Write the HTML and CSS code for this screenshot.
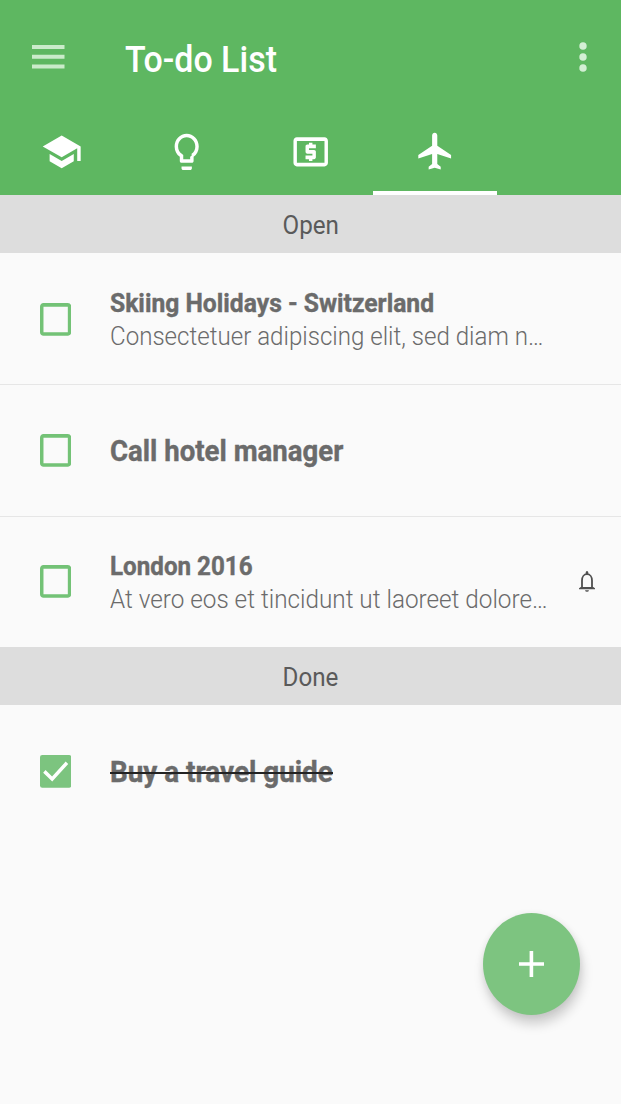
FILE: index.html
```
<!DOCTYPE html>
<html lang="en">
<head>
<meta charset="utf-8">
<title>To-do List</title>
<link rel="stylesheet" href="styles.css">
</head>
<body>
<div class="app">
  <header class="appbar">
    <div class="toolbar">
      <svg class="menu" viewBox="0 0 33 24"><path d="M0 0h32.500v4H0zM0 9.800h32.500v4H0zM0 19.500h32.500v4H0z"/></svg>
      <h1 class="title"><span class="t">To-do List</span></h1>
      <svg class="more" viewBox="0 0 8 30"><ellipse cx="4" cy="4" rx="3.700" ry="3.800"/><ellipse cx="4" cy="15" rx="3.700" ry="3.800"/><ellipse cx="4" cy="26" rx="3.700" ry="3.800"/></svg>
    </div>
    <nav class="tabs">
      <a class="tab"><svg class="icon" viewBox="0 0 24 24" preserveAspectRatio="none"><path d="M5 13.180v4L12 21l7-3.820v-4L12 17l-7-3.820zM12 3L1 9l11 6 9-4.910V17h2V9L12 3z"/></svg></a>
      <a class="tab"><svg class="icon" viewBox="0 0 24 24" preserveAspectRatio="none"><path d="M9 21c0 .550.450 1 1 1h4c.550 0 1-.450 1-1v-1H9v1zm3-19C8.140 2 5 5.140 5 9c0 2.380 1.190 4.470 3 5.740V17c0 .550.450 1 1 1h6c.550 0 1-.450 1-1v-2.260c1.810-1.270 3-3.360 3-5.740 0-3.860-3.140-7-7-7zm2.850 12.100l-.850.600V16h-4v-2.300l-.850-.600C7.800 12.160 7 10.630 7 9c0-2.760 2.240-5 5-5s5 2.240 5 5c0 1.630-.800 3.160-2.150 4.100z"/></svg></a>
      <a class="tab"><svg class="icon" viewBox="0 0 24 24" preserveAspectRatio="none"><path d="M11 17h2v-1h1c.550 0 1-.450 1-1v-3c0-.550-.450-1-1-1h-3v-1h4V8h-2V7h-2v1h-1c-.550 0-1 .450-1 1v3c0 .550.450 1 1 1h3v1H9v2h2v1zm9-13H4c-1.110 0-1.990.890-1.990 2L2 18c0 1.110.890 2 2 2h16c1.110 0 2-.890 2-2V6c0-1.110-.890-2-2-2zm0 14H4V6h16v12z"/></svg></a>
      <a class="tab active"><svg class="icon" viewBox="0 0 24 24" preserveAspectRatio="none"><path d="M21.500 15.700v-2l-8-5V3c0-.830-.670-1.500-1.500-1.500S10.500 2.170 10.500 3v5.700l-8 5v2l8-2.500V18.700l-2 1.500v1.500l3.500-1 3.500 1v-1.500l-2-1.500V13.200l8 2.500z"/></svg></a>
    </nav>
  </header>
  <h2 class="section"><span class="t">Open</span></h2>
  <ul class="list">
    <li class="row">
      <svg class="check" viewBox="3 3 18 18" preserveAspectRatio="none"><path d="M19 5v14H5V5h14m0-2H5c-1.100 0-2 .900-2 2v14c0 1.100.900 2 2 2h14c1.100 0 2-.900 2-2V5c0-1.100-.900-2-2-2z"/></svg>
      <div class="text"><span class="t name wide">Skiing Holidays - Switzerland</span><span class="t note">Consectetuer adipiscing elit, sed diam n…</span></div>
    </li>
    <li class="row">
      <svg class="check" viewBox="3 3 18 18" preserveAspectRatio="none"><path d="M19 5v14H5V5h14m0-2H5c-1.100 0-2 .900-2 2v14c0 1.100.900 2 2 2h14c1.100 0 2-.900 2-2V5c0-1.100-.900-2-2-2z"/></svg>
      <div class="text"><span class="t name single">Call hotel manager</span></div>
    </li>
    <li class="row">
      <svg class="check" viewBox="3 3 18 18" preserveAspectRatio="none"><path d="M19 5v14H5V5h14m0-2H5c-1.100 0-2 .900-2 2v14c0 1.100.900 2 2 2h14c1.100 0 2-.900 2-2V5c0-1.100-.900-2-2-2z"/></svg>
      <div class="text"><span class="t name">London 2016</span><span class="t note long">At vero eos et tincidunt ut laoreet dolore…</span></div>
      <svg class="bell" viewBox="0 0 16 21"><path class="bell-line" d="M3 17.300V9.500C3 5.800 5 3.200 8 3.200s5 2.600 5 6.300V17.300"/><path d="M6.700 4V1.500Q6.700 0 8 0t1.300 1.500V4zM0 18.300v-1l1.800-1.200h12.400l1.800 1.200v1zM6 19.200h4Q9.700 20.800 8 20.800T6 19.200z"/></svg>
    </li>
  </ul>
  <h2 class="section"><span class="t">Done</span></h2>
  <ul class="list">
    <li class="row last">
      <svg class="check done" viewBox="3 3 18 18" preserveAspectRatio="none"><rect x="3" y="3" width="18" height="18" rx="1.300"/><path class="tick" d="M5.500 12l4.500 4.200L18.500 7.300"/></svg>
      <div class="text"><span class="t name single struck">Buy a travel guide</span></div>
    </li>
  </ul>
  <button class="fab" aria-label="Add"><svg viewBox="0 0 25 26"><path d="M10.600 0h3.600v11.200H25v3.600H14.200V26h-3.600V14.800H0v-3.600h10.600z"/></svg></button>
</div>
</body>
</html>
```
FILE: styles.css
```
* { box-sizing: border-box; margin: 0; padding: 0; }
body { background: #fafafa; font-family: Roboto, "Liberation Sans", sans-serif; color: #6b6b6b; }
.app { position: relative; width: 621px; height: 1104px; overflow: hidden; }
svg { display: block; flex: none; }
/* Type is slightly condensed throughout */
.t { display: block; width: max-content; white-space: nowrap; transform: scaleX(.948); transform-origin: left center; }
.appbar { height: 195px; background: #5eb761; display: flex; flex-direction: column; }
.toolbar { height: 108px; padding: 8px 34px 0 32px; display: flex; align-items: center; }
.menu { width: 33px; height: 24px; fill: #caebca; margin-top: -2px; }
.title { flex: 1; margin-left: 59.500px; color: #fff; font-size: 36.400px; line-height: 44px; font-weight: 500; margin-top: 3px; }
.title .t { transform: scaleX(.934); }
.more { width: 8px; height: 30px; fill: #d3efd4; margin-top: -2px; }
.tabs { height: 87px; display: flex; }
.tab { width: 124.200px; height: 87px; display: flex; justify-content: center; padding-top: 22px; }
.active { border-bottom: 4px solid #fff; }
.icon { width: 41.400px; height: 43.700px; fill: #fff; }
.section { height: 58px; background: #ddd; display: flex; justify-content: center; align-items: center; font-size: 25.500px; line-height: 30px; font-weight: 400; color: #5a5a5a; padding-top: 2px; }
.section .t { transform-origin: center; }
.list { list-style: none; }
.row { height: 131.330px; display: flex; align-items: center; padding: 0 26.500px 0 39.500px; }
.row + .row { border-top: 1.500px solid #e6e6e6; }
.row:first-child { padding-top: 1px; }
.last { padding-top: 2px; }
.check { width: 31.300px; height: 32.800px; fill: #73c276; }
.done { fill: #7cc47f; }
.tick { fill: none; stroke: #fff; stroke-width: 2; }
.text { flex: 1; min-width: 0; margin-left: 39.500px; padding-top: 1px; }
.name { font-size: 25.500px; line-height: 34px; font-weight: 700; -webkit-text-stroke: .4px #6b6b6b; }
.wide { transform: scaleX(.967); }
.note { font-size: 25.500px; line-height: 33px; font-weight: 300; transform: scaleX(.945); }
.long { transform: scaleX(.952); }
.single { font-size: 29.100px; }
.struck { position: relative; transform: scaleX(.957); }
.struck::after { content: ""; position: absolute; left: 0; right: 0; top: 17px; height: 2px; background: #222; }
.bell { width: 16px; height: 21px; fill: #4f4f4f; }
.bell-line { fill: none; stroke: #4f4f4f; stroke-width: 1.800; }
.fab { position: absolute; left: 483px; top: 913px; width: 97px; height: 102px; border: 0; border-radius: 50%; background: #7dc480; display: flex; align-items: center; justify-content: center; box-shadow: 2px 9px 12px rgba(0,0,0,.18), 0 1px 7px rgba(0,0,0,.07); }
.fab svg { width: 25px; height: 26px; fill: #fff; }
```
